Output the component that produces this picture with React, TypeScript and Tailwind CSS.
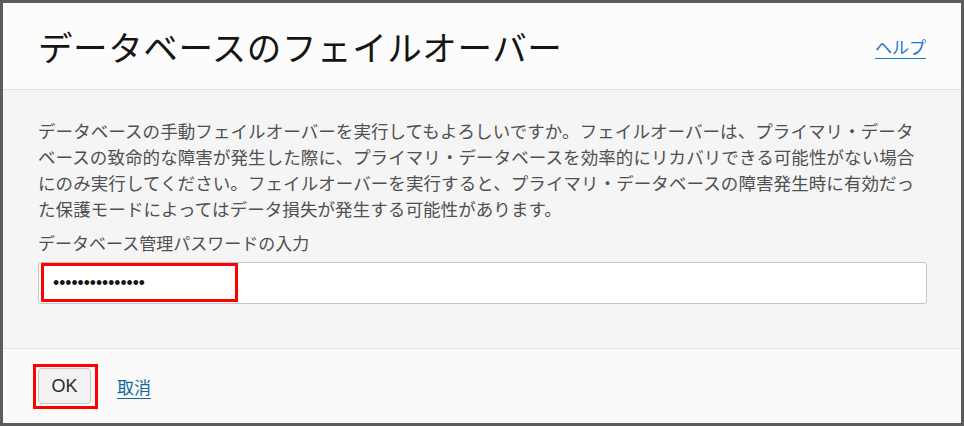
import React from "react";

const jp = "font-['Noto_Sans_CJK_JP','Noto_Sans',sans-serif]";

const bodyLines = [
  "データベースの手動フェイルオーバーを実行してもよろしいですか。フェイルオーバーは、プライマリ・データ",
  "ベースの致命的な障害が発生した際に、プライマリ・データベースを効率的にリカバリできる可能性がない場合",
  "にのみ実行してください。フェイルオーバーを実行すると、プライマリ・データベースの障害発生時に有効だっ",
  "た保護モードによってはデータ損失が発生する可能性があります。",
];

export default function App() {
  return (
    <div className={`w-[964px] h-[426px] bg-[#5c5c5c] p-[3px] ${jp}`}>
      <div className="flex h-full flex-col overflow-hidden bg-[#fcfcfc]">
        {/* Header */}
        <div className="flex h-[87px] shrink-0 items-center justify-between border-b border-[#e2e2e2] px-[35px]">
          <h1 className="text-[34.5px] leading-none font-normal tracking-[0.6px] text-[#161513]">
            データベースのフェイルオーバー
          </h1>
          <a href="#" className="text-[17px] leading-none text-[#1f76cf] underline underline-offset-4">
            ヘルプ
          </a>
        </div>

        {/* Body */}
        <div className="flex h-[259px] shrink-0 flex-col border-b border-[#e4e4e4] bg-[#f5f5f5] px-[35px] pt-[28px]">
          <p className="text-[17.5px] leading-[26px] tracking-[0.08px] text-[#505050]">
            {bodyLines.map((line) => (
              <span key={line} className="block whitespace-nowrap">
                {line}
              </span>
            ))}
          </p>
          <label className="mt-[8px] block text-[17px] leading-[26px] text-[#505050]">
            データベース管理パスワードの入力
          </label>
          <div className="relative mt-[6px] h-[42px] w-[889px]">
            <input
              type="password"
              readOnly
              value="abcdefghijklmno"
              className="h-full w-full rounded-[3px] border border-[#c3c7cc] bg-white pl-[14px] font-['Liberation_Sans',sans-serif] text-[17.5px] text-[#161513] outline-none"
            />
            <div className="pointer-events-none absolute left-[3px] top-[1px] h-[39px] w-[197px] border-[3px] border-[#ff0000]" />
          </div>
        </div>

        {/* Footer */}
        <div className="flex flex-1 items-center gap-[26px] bg-[#fafafa] px-[35px]">
          <div className="relative">
            <button className="h-[36px] w-[53px] rounded-[4px] border border-[#c6c6c6] bg-[#f2f2f2] font-['Liberation_Sans',sans-serif] text-[18px] text-[#2a2a2a]">
              OK
            </button>
            <div className="pointer-events-none absolute -left-[5px] -top-[4px] h-[45px] w-[65px] border-[3px] border-[#ff0000]" />
          </div>
          <a href="#" className="text-[17px] leading-none text-[#0f6a9c] underline underline-offset-4">
            取消
          </a>
        </div>
      </div>
    </div>
  );
}
